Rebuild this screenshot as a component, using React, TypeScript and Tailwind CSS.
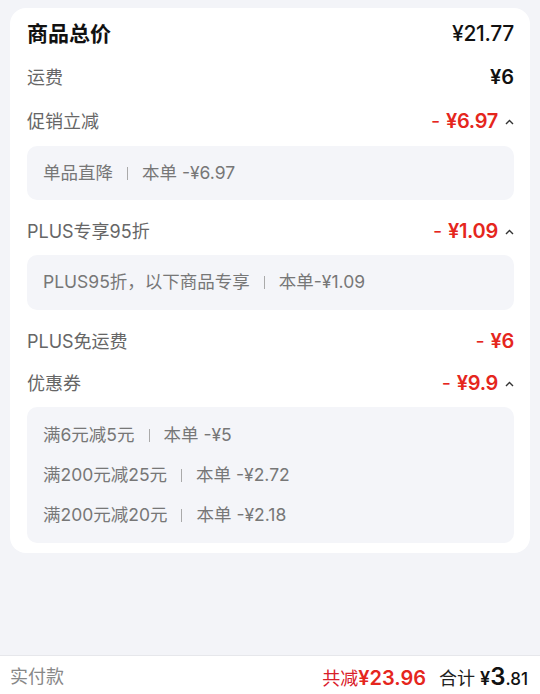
const font = { fontFamily: '"Inter", "Noto Sans CJK SC", sans-serif' };

function Caret() {
  return (
    <svg width="9" height="6" viewBox="0 0 9 6" className="ml-[7px] mt-[2px]">
      <path d="M1 5 L4.5 1.5 L8 5" fill="none" stroke="#333" strokeWidth="1.4" />
    </svg>
  );
}

function Row({ label, children, className = "" }: { label: string; children: React.ReactNode; className?: string }) {
  return (
    <div className={`flex h-[34px] items-center justify-between ${className}`}>
      <span className="text-[18px] text-[#666]">{label}</span>
      <div className="flex items-center">{children}</div>
    </div>
  );
}

function Minus({ amount, caret = true }: { amount: string; caret?: boolean }) {
  return (
    <>
      <span className="text-[20px] font-semibold text-[#e5261d] tracking-[-0.3px]">
        <span className="mr-[6px] font-normal">-</span>¥{amount}
      </span>
      {caret && <Caret />}
    </>
  );
}

function Sep() {
  return <span className="mx-[14px] inline-block h-[13px] w-px bg-[#aaa]" />;
}

export default function App() {
  return (
    <div className="flex h-[694px] w-[540px] flex-col bg-[#f3f4f8]" style={font}>
      <div className="mx-[10px] mt-[8px] rounded-[16px] bg-white pb-[10px] pl-[17px] pr-[16px] pt-[9px]">
        <div className="flex h-[34px] items-center justify-between">
          <span className="text-[21px] font-bold text-[#111]">商品总价</span>
          <span className="text-[21px] font-medium text-[#111] tracking-[-0.3px]">¥21.77</span>
        </div>
        <Row label="运费" className="mt-[9px]">
          <span className="text-[20px] font-semibold text-[#111]">¥6</span>
        </Row>
        <Row label="促销立减" className="mt-[10px]">
          <Minus amount="6.97" />
        </Row>
        <div className="mt-[8px] flex h-[54px] items-center rounded-[10px] bg-[#f4f5f9] px-[16px] text-[17.5px] text-[#777]">
          单品直降<Sep />本单 -¥6.97
        </div>
        <Row label="PLUS专享95折" className="mt-[14px]">
          <Minus amount="1.09" />
        </Row>
        <div className="mt-[7px] flex h-[55px] items-center rounded-[10px] bg-[#f4f5f9] px-[16px] text-[17.5px] text-[#777]">
          PLUS95折，以下商品专享<Sep />本单-¥1.09
        </div>
        <Row label="PLUS免运费" className="mt-[14px]">
          <Minus amount="6" caret={false} />
        </Row>
        <Row label="优惠券" className="mt-[8px]">
          <Minus amount="9.9" />
        </Row>
        <div className="mt-[7px] flex flex-col rounded-[10px] bg-[#f4f5f9] px-[16px] py-[8px] text-[17.5px] text-[#777]">
          <div className="flex h-[40px] items-center">满6元减5元<Sep />本单 -¥5</div>
          <div className="flex h-[40px] items-center">满200元减25元<Sep />本单 -¥2.72</div>
          <div className="flex h-[40px] items-center">满200元减20元<Sep />本单 -¥2.18</div>
        </div>
      </div>
      <div className="flex-1" />
      <div className="flex h-[39px] items-center justify-between border-t border-[#e6e7eb] bg-white pl-[10px] pr-[12px] pt-[3px]">
        <span className="text-[18px] text-[#888]">实付款</span>
        <div className="flex items-baseline">
          <span className="text-[18px] text-[#d9202a]">共减</span>
          <span className="text-[20px] font-semibold text-[#e5261d]">¥23.96</span>
          <span className="ml-[13px] text-[18px] text-[#222]">合计</span>
          <span className="ml-[5px] text-[18px] font-semibold text-[#111]">¥</span>
          <span className="text-[24px] font-semibold text-[#111]">3</span>
          <span className="text-[17px] font-medium text-[#111]">.81</span>
        </div>
      </div>
    </div>
  );
}
